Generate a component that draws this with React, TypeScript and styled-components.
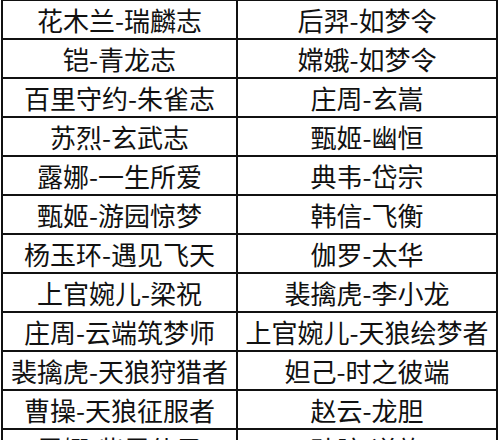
import * as React from 'react';
import styled, { createGlobalStyle } from 'styled-components';

const GlobalStyle = createGlobalStyle`
  html, body {
    margin: 0;
    padding: 0;
    background: #fff;
  }
  body {
    font-family: "Noto Sans CJK SC", "Noto Sans", sans-serif;
    overflow: hidden;
  }
`;

const Page = styled.div`
  width: 500px;
  height: 440px;
  overflow: hidden;
  background: #fff;
  padding-left: 1px;
  box-sizing: border-box;
`;

const Table = styled.table`
  border-collapse: collapse;
  table-layout: fixed;
  width: 494px;
  margin-top: -1px;
`;

const Cell = styled.td<{ $wide?: boolean }>`
  border: 2px solid #111;
  height: 37px;
  padding: 0;
  text-align: center;
  vertical-align: middle;
  font-size: 26px;
  line-height: 1;
  color: #111;
  white-space: nowrap;
  overflow: hidden;
  width: ${p => (p.$wide ? '258px' : '233px')};
`;

const rows: [string, string][] = [
  ['花木兰-瑞麟志', '后羿-如梦令'],
  ['铠-青龙志', '嫦娥-如梦令'],
  ['百里守约-朱雀志', '庄周-玄嵩'],
  ['苏烈-玄武志', '甄姬-幽恒'],
  ['露娜-一生所爱', '典韦-岱宗'],
  ['甄姬-游园惊梦', '韩信-飞衡'],
  ['杨玉环-遇见飞天', '伽罗-太华'],
  ['上官婉儿-梁祝', '裴擒虎-李小龙'],
  ['庄周-云端筑梦师', '上官婉儿-天狼绘梦者'],
  ['裴擒虎-天狼狩猎者', '妲己-时之彼端'],
  ['曹操-天狼征服者', '赵云-龙胆'],
  ['露娜-紫霞仙子', '孙膑-逆旅'],
];

export default function App() {
  return (
    <Page>
      <GlobalStyle />
      <Table>
        <tbody>
          {rows.map(([a, b], i) => (
            <tr key={i}>
              <Cell>{a}</Cell>
              <Cell $wide>{b}</Cell>
            </tr>
          ))}
        </tbody>
      </Table>
    </Page>
  );
}
